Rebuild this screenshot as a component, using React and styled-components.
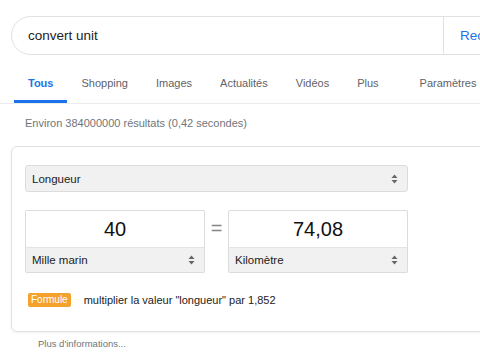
import React from "react";
import styled, { createGlobalStyle } from "styled-components";

const Global = createGlobalStyle`
  html, body { margin: 0; padding: 0; background: #fff; overflow: hidden; }
  body { font-family: "Liberation Sans", Arial, sans-serif; width: 480px; height: 360px; }
`;

const Page = styled.div`
  width: 480px;
  height: 360px;
  overflow: hidden;
  padding-top: 16px;
  box-sizing: border-box;
`;

const SearchBox = styled.div`
  margin-left: 11px;
  width: 560px;
  height: 39px;
  box-sizing: border-box;
  border: 1px solid #dfe1e5;
  border-radius: 20px 0 0 20px;
  display: flex;
  align-items: center;
`;

const Query = styled.div`
  width: 431px;
  padding-left: 16px;
  box-sizing: border-box;
  font-size: 13.5px;
  color: #222;
`;

const SearchButton = styled.div`
  height: 100%;
  border-left: 1px solid #dfe1e5;
  padding-left: 16px;
  display: flex;
  align-items: center;
  font-size: 13.5px;
  color: #1a73e8;
`;

const Tabs = styled.div`
  display: flex;
  align-items: flex-end;
  height: 49px;
  padding-left: 14px;
  border-bottom: 1px solid #ebebeb;
  box-sizing: border-box;
`;

const Tab = styled.div`
  padding: 2px 14px 0;
  height: 28px;
  box-sizing: border-box;
  font-size: 11px;
  font-weight: ${(p) => (p.$active ? 700 : 400)};
  color: ${(p) => (p.$active ? "#1a73e8" : "#5f6368")};
  border-bottom: 3px solid ${(p) => (p.$active ? "#1a73e8" : "transparent")};
  margin-left: ${(p) => p.$gap || 0}px;
  display: flex;
  align-items: flex-start;
`;

const Stats = styled.div`
  padding: 13px 0 0 25px;
  height: 30px;
  box-sizing: border-box;
  font-size: 11px;
  color: #70757a;
`;

const Card = styled.div`
  margin: 12px 0 0 11px;
  width: 560px;
  box-sizing: border-box;
  border: 1px solid #dfe1e5;
  border-radius: 6px;
  box-shadow: 0 1px 3px rgba(0, 0, 0, 0.06);
  padding: 18px 13px 24px;
  display: flex;
  flex-direction: column;
`;

const Select = styled.div`
  width: ${(p) => p.$width}px;
  height: ${(p) => p.$height}px;
  box-sizing: border-box;
  background: #f1f1f1;
  border: 1px solid #dcdcdc;
  border-radius: ${(p) => (p.$flat ? "0 0 2px 2px" : "3px")};
  ${(p) => (p.$flat ? "border-top: 1px solid #e4e4e4;" : "")}
  display: flex;
  align-items: center;
  justify-content: space-between;
  padding: 0 9px 0 6px;
  font-size: 11.5px;
  color: #222;
`;

const Arrows = () => (
  <svg width="7" height="10" viewBox="0 0 7 10">
    <path d="M3.5 0.5 L6.5 4 L0.5 4 Z" fill="#666" />
    <path d="M3.5 9.5 L6.5 6 L0.5 6 Z" fill="#666" />
  </svg>
);

const ConvertRow = styled.div`
  display: flex;
  align-items: flex-start;
  margin-top: 18px;
`;

const UnitBox = styled.div`
  width: 180px;
  display: flex;
  flex-direction: column;
`;

const NumberField = styled.div`
  height: 37px;
  box-sizing: border-box;
  border: 1px solid #dcdcdc;
  border-bottom: none;
  border-radius: 2px 2px 0 0;
  display: flex;
  align-items: center;
  justify-content: center;
  font-size: 20px;
  color: #111;
`;

const Equals = styled.div`
  width: 23px;
  height: 37px;
  display: flex;
  align-items: center;
  justify-content: center;
  font-size: 20px;
  color: #888;
`;

const FormulaRow = styled.div`
  display: flex;
  align-items: center;
  margin-top: 20px;
  padding-left: 3px;
  font-size: 11px;
  color: #222;
`;

const Badge = styled.span`
  background: #f4a12e;
  color: #fff;
  font-size: 10px;
  height: 14px;
  line-height: 14px;
  padding: 0 3px;
  border-radius: 2px;
  margin-right: 13px;
`;

const More = styled.div`
  padding: 6px 0 0 38px;
  font-size: 9.5px;
  color: #70757a;
`;

const tabs = [
  { label: "Tous", active: true },
  { label: "Shopping" },
  { label: "Images" },
  { label: "Actualités" },
  { label: "Vidéos" },
  { label: "Plus" },
  { label: "Paramètres", gap: 13 },
];

export default function App() {
  return (
    <Page>
      <Global />
      <SearchBox>
        <Query>convert unit</Query>
        <SearchButton>Rechercher</SearchButton>
      </SearchBox>
      <Tabs>
        {tabs.map((t) => (
          <Tab key={t.label} $active={t.active} $gap={t.gap}>
            {t.label}
          </Tab>
        ))}
      </Tabs>
      <Stats>Environ 384000000 résultats (0,42 secondes)</Stats>
      <Card>
        <Select $width={383} $height={27}>
          Longueur
          <Arrows />
        </Select>
        <ConvertRow>
          <UnitBox>
            <NumberField>40</NumberField>
            <Select $width={180} $height={26} $flat>
              Mille marin
              <Arrows />
            </Select>
          </UnitBox>
          <Equals>=</Equals>
          <UnitBox>
            <NumberField>74,08</NumberField>
            <Select $width={180} $height={26} $flat>
              Kilomètre
              <Arrows />
            </Select>
          </UnitBox>
        </ConvertRow>
        <FormulaRow>
          <Badge>Formule</Badge>
          multiplier la valeur "longueur" par 1,852
        </FormulaRow>
      </Card>
      <More>Plus d'informations...</More>
    </Page>
  );
}
